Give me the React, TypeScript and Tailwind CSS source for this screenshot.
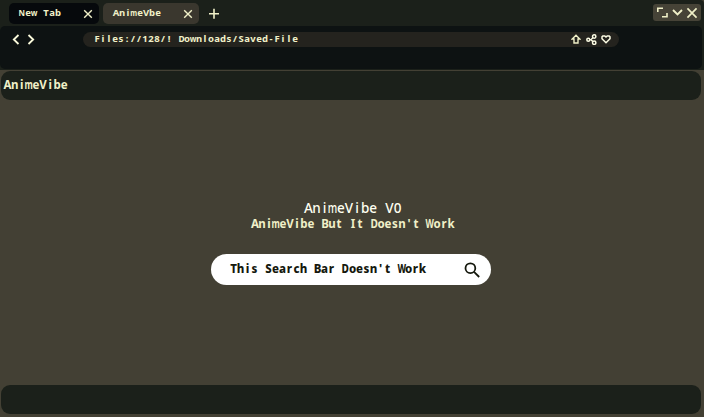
import React from "react";

const narrowed: Record<string, string> = {
  m: "scale-x-[0.74]",
  W: "scale-x-[0.75]",
  N: "scale-x-[0.84]",
  D: "scale-x-[0.88]",
  w: "scale-x-[0.82]",
};

// Sets each glyph in a cell of equal width, squeezing the wide ones.
function Mono({ text, cell, className = "" }: { text: string; cell: string; className?: string }) {
  return (
    <span className={`block whitespace-pre ${className}`}>
      {text.split(" ").map((word, w) => (
        <React.Fragment key={w}>
          {w > 0 && <span className={`inline-block ${cell}`}> </span>}
          {word.split("").map((c, i) => (
            <span key={i} className={`inline-flex justify-center ${cell}`}>
              {narrowed[c] ? <span className={`block ${narrowed[c]}`}>{c}</span> : c}
            </span>
          ))}
        </React.Fragment>
      ))}
    </span>
  );
}

function Cross({ className }: { className: string }) {
  return (
    <svg className={className} viewBox="0 0 10 10" fill="none" stroke="currentColor" strokeWidth="1.4">
      <path d="M1.2 1.2 8.8 8.8M8.8 1.2 1.2 8.8" />
    </svg>
  );
}

function Tab({ label, className }: { label: string; className: string }) {
  return (
    <div className={`flex h-[21px] items-center justify-between rounded-[5px] ${className}`}>
      <Mono text={label} cell="w-[6px]" className="-mt-px text-[9.5px] leading-[14px] font-bold" />
      <Cross className="size-[10px]" />
    </div>
  );
}

export default function App() {
  return (
    <div className="flex h-[417px] w-[704px] flex-col overflow-hidden bg-[#434034] font-['Noto_Sans',sans-serif] text-[#f0f0c8]">
      <div className="h-[70px] rounded-tr-[4px] bg-[#1b201a]">
        <header className="flex h-[26px] pt-[3px] pl-[9px]">
          <Tab label="New Tab" className="w-[90px] bg-[#06090c] pr-[6px] pl-[10px]" />
          <Tab label="AnimeVbe" className="ml-1 w-24 bg-[#3a372e] pr-[6px] pl-[10px]" />
          <svg className="mt-[5px] ml-[9px] size-3" viewBox="0 0 12 12" fill="none" stroke="currentColor" strokeWidth="1.6">
            <path d="M6 .8v10M1 5.8h10" />
          </svg>
          <div className="mt-px mr-[3px] ml-auto flex h-[17px] w-12 items-center rounded-[3px] bg-[#464337] pl-1">
            <svg className="size-[11px]" viewBox="0 0 11 11" fill="none" stroke="currentColor" strokeWidth="1.6">
              <path d="M.8 5V1.3H6M10 6v3.8H5" />
            </svg>
            <svg className="ml-1 h-[7px] w-[11px]" viewBox="0 0 11 7" fill="none" stroke="currentColor" strokeWidth="1.9">
              <path d="M1 1l4.5 4.5L10 1" />
            </svg>
            <Cross className="ml-[3px] size-[12px]" />
          </div>
        </header>
        <nav className="flex h-[43px] w-[702px] items-start rounded-[5px] bg-[#0d1212] pt-[6px] pl-3">
          <svg className="mt-[2px] h-[11px] w-[23px] text-[#fbfbdc]" viewBox="0 0 23 11" fill="none" stroke="currentColor" strokeWidth="1.8">
            <path d="M6.5 1 1.8 5.5l4.7 4.5M16.5 1l4.7 4.5-4.7 4.5" />
          </svg>
          <div className="ml-12 flex h-[15px] w-[536px] items-center rounded-full bg-[#24231e] pr-2 pl-[11px]">
            <Mono text="Files://128/! Downloads/Saved-File" cell="w-[6px]" className="-mt-px text-[9.5px] leading-[14px] font-bold" />
            <svg className="-mt-px ml-auto h-[10px] w-[10px]" viewBox="0 0 10 10" fill="none" stroke="currentColor" strokeWidth="1.4">
              <path d="M5 1.2 1.2 5H3v4h4V5h1.8z" />
            </svg>
            <svg className="ml-[5px] h-[11px] w-[11px] text-[#fcfce4]" viewBox="0 0 11 11" fill="none" stroke="currentColor" strokeWidth="1.5">
              <circle cx="2.3" cy="5.7" r="1.5" />
              <circle cx="8.2" cy="2.5" r="1.7" />
              <circle cx="8.2" cy="8.7" r="1.7" />
              <path d="M3.6 5.7h2.2M5.5 5 7 3.6M5.5 6.3 7 7.8" />
            </svg>
            <svg className="ml-1 h-[9px] w-[10px] text-[#fcfce4]" viewBox="0 0 10 9" fill="none" stroke="currentColor" strokeWidth="1.5">
              <path d="M5 7.7 1 3.7V1.8L1.8 1h2L5 2l1.2-1h2l.8.8v1.9z" />
            </svg>
          </div>
        </nav>
      </div>
      <div className="mt-px ml-px flex h-[29px] w-[700px] items-center rounded-[9px] bg-[#1b201a] pl-[3px]">
        <Mono text="AnimeVibe" cell="w-[7.1px]" className="-mt-px text-[11.5px] leading-4 font-bold" />
      </div>
      <main className="flex h-[285px] flex-col items-center pt-[99px]">
        <Mono text="AnimeVibe V0" cell="w-[8.1px]" className="pl-[2px] text-[13.5px] leading-[18px] font-medium text-[#fffff0]" />
        <Mono text="AnimeVibe But It Doesn't Work" cell="w-[7px]" className="pl-[2px] text-[11.5px] leading-[14px] font-bold" />
        <div className="mt-[23px] mr-[2px] flex h-[31px] w-[280px] items-center justify-between rounded-full bg-white pr-[11px] pl-[19px] text-[#15180d]">
          <Mono text="This Search Bar Doesn't Work" cell="w-[7px]" className="-mt-px text-[11.5px] leading-4 font-extrabold" />
          <svg className="mt-px size-4" viewBox="0 0 16 16" fill="none" stroke="currentColor" strokeWidth="1.8">
            <circle cx="6.4" cy="6.2" r="4.9" />
            <path d="m10 9.8 5.2 5.2" />
          </svg>
        </div>
      </main>
      <footer className="ml-px h-[29px] w-[700px] rounded-[9px] bg-[#1b201a]" />
    </div>
  );
}
